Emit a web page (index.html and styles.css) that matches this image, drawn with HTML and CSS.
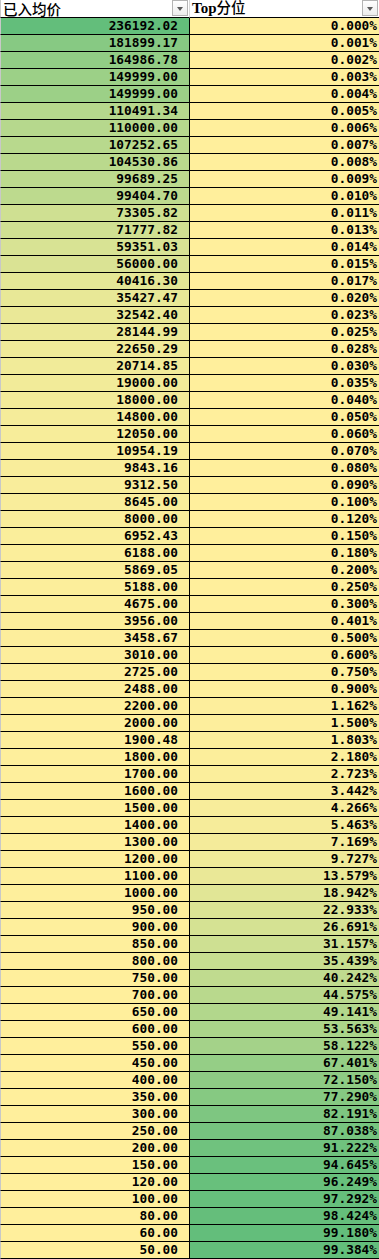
FILE: index.html
```html
<!DOCTYPE html>
<html lang="zh">
<head>
<meta charset="utf-8">
<title>已入均价</title>
<link rel="stylesheet" href="styles.css">
</head>
<body>
<div class="sheet" id="sheet">
  <div class="hd hd1"><span class="hd-text">已入均价</span><span class="filter"><span class="tri"></span></span></div>
  <div class="hd hd2"><span class="hd-text"><span class="latin">Top</span>分位</span><span class="filter"><span class="tri"></span></span></div>
</div>
<script src="script.js"></script>
</body>
</html>
```

FILE: script.js
```js
var rows = [
["236192.02","0.000%"],["181899.17","0.001%"],["164986.78","0.002%"],["149999.00","0.003%"],
["149999.00","0.004%"],["110491.34","0.005%"],["110000.00","0.006%"],["107252.65","0.007%"],
["104530.86","0.008%"],["99689.25","0.009%"],["99404.70","0.010%"],["73305.82","0.011%"],
["71777.82","0.013%"],["59351.03","0.014%"],["56000.00","0.015%"],["40416.30","0.017%"],
["35427.47","0.020%"],["32542.40","0.023%"],["28144.99","0.025%"],["22650.29","0.028%"],
["20714.85","0.030%"],["19000.00","0.035%"],["18000.00","0.040%"],["14800.00","0.050%"],
["12050.00","0.060%"],["10954.19","0.070%"],["9843.16","0.080%"],["9312.50","0.090%"],
["8645.00","0.100%"],["8000.00","0.120%"],["6952.43","0.150%"],["6188.00","0.180%"],
["5869.05","0.200%"],["5188.00","0.250%"],["4675.00","0.300%"],["3956.00","0.401%"],
["3458.67","0.500%"],["3010.00","0.600%"],["2725.00","0.750%"],["2488.00","0.900%"],
["2200.00","1.162%"],["2000.00","1.500%"],["1900.48","1.803%"],["1800.00","2.180%"],
["1700.00","2.723%"],["1600.00","3.442%"],["1500.00","4.266%"],["1400.00","5.463%"],
["1300.00","7.169%"],["1200.00","9.727%"],["1100.00","13.579%"],["1000.00","18.942%"],
["950.00","22.933%"],["900.00","26.691%"],["850.00","31.157%"],["800.00","35.439%"],
["750.00","40.242%"],["700.00","44.575%"],["650.00","49.141%"],["600.00","53.563%"],
["550.00","58.122%"],["450.00","67.401%"],["400.00","72.150%"],["350.00","77.290%"],
["300.00","82.191%"],["250.00","87.038%"],["200.00","91.222%"],["150.00","94.645%"],
["120.00","96.249%"],["100.00","97.292%"],["80.00","98.424%"],["60.00","99.180%"],
["50.00","99.384%"]
];
var lo = [255, 239, 156], hi = [99, 190, 123];
function mix(t) {
  var c = [];
  for (var i = 0; i < 3; i++) c.push(Math.round(lo[i] + (hi[i] - lo[i]) * t));
  return "rgb(" + c.join(",") + ")";
}
var min1 = 50, max1 = 236192.02, min2 = 0, max2 = 99.384;
var sheet = document.getElementById("sheet");
rows.forEach(function (r) {
  var a = document.createElement("div");
  a.className = "cell c1";
  a.textContent = r[0];
  a.style.backgroundColor = mix((parseFloat(r[0]) - min1) / (max1 - min1));
  var b = document.createElement("div");
  b.className = "cell c2";
  b.textContent = r[1];
  b.style.backgroundColor = mix((parseFloat(r[1]) - min2) / (max2 - min2));
  sheet.appendChild(a);
  sheet.appendChild(b);
});
```

FILE: styles.css
```css
html, body {
  margin: 0;
  padding: 0;
  background: #ffffff;
}
.sheet {
  display: grid;
  grid-template-columns: 190px 189px;
  width: 379px;
}
.hd {
  box-sizing: border-box;
  height: 18px;
  border-bottom: 1px solid #000;
  background: #fff;
  display: flex;
  align-items: flex-end;
  justify-content: space-between;
  padding: 0 1px 0 2px;
  font-family: "Noto Sans CJK SC", sans-serif;
  font-size: 14.5px;
  font-weight: 500;
  color: #000;
}
.hd1 {
  border-left: 1px solid #c8c8c8;
  border-right: 1px solid #d8d8d8;
}
.hd-text {
  white-space: nowrap;
  line-height: 15px;
  padding-bottom: 1px;
}
.latin {
  font-family: "Liberation Serif", serif;
  font-weight: 700;
  font-size: 15px;
}
.filter {
  box-sizing: border-box;
  align-self: center;
  width: 16px;
  height: 16px;
  border: 1px solid #b4b4b4;
  background: linear-gradient(#ffffff, #ececec);
  display: flex;
  align-items: center;
  justify-content: center;
  margin-top: -1px;
}
.tri {
  width: 0;
  height: 0;
  border-left: 3.5px solid transparent;
  border-right: 3.5px solid transparent;
  border-top: 4px solid #5a5a5a;
  margin-top: 1px;
}
.cell {
  box-sizing: border-box;
  height: 17px;
  border-bottom: 1px solid #000;
  text-align: right;
  font-family: "DejaVu Sans Mono", "Liberation Mono", monospace;
  font-weight: 700;
  font-size: 12.8px;
  line-height: 16px;
  color: #000;
  white-space: nowrap;
  overflow: hidden;
}
.c1 {
  border-left: 1px solid #c8c8c8;
  border-right: 1px solid #000;
  padding-right: 11px;
}
.c2 {
  padding-right: 2px;
}
```
